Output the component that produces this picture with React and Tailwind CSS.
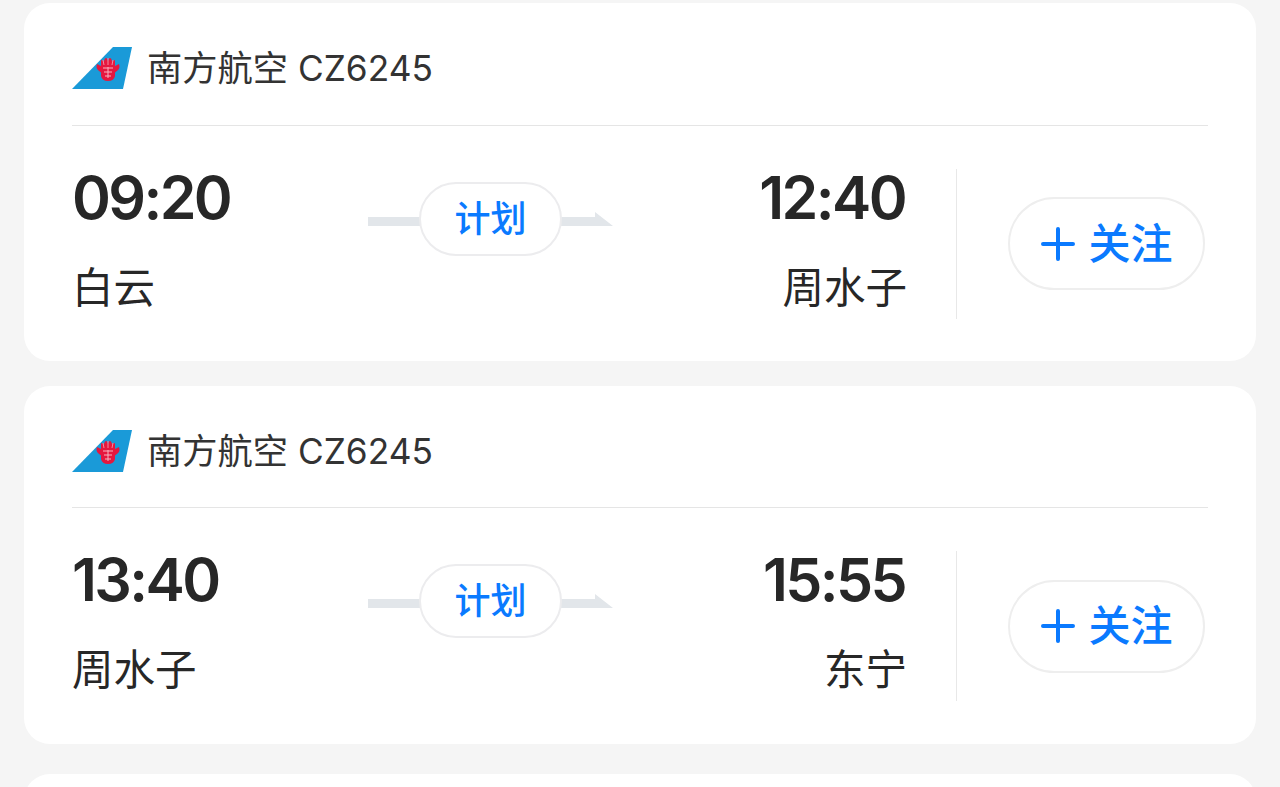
const flights = [
  { from: '09:20', fromName: '白云', to: '12:40', toName: '周水子', headerClass: 'h-[123px]', bodyClass: 'h-[235px]' },
  { from: '13:40', fromName: '周水子', to: '15:55', toName: '东宁', headerClass: 'h-[122px]', bodyClass: 'h-[236px]' },
];

const cjk = "font-['Inter','Noto_Sans_CJK_SC',sans-serif]";

function AirlineLogo() {
  return (
    <svg width="60" height="43" viewBox="0 0 60 43" className="shrink-0 -mt-[3px]">
      <path d="M0 43 L41 1 L60 1 L51 43 Z" fill="#1a9ad8" />
      {/* kapok flower */}
      <path
        d="M29 20 V15 q0-1.500 1.400-1 L31.500 16 L33 12.500 q1-1 2 0 L36 15 L37 12.500 q1-1 2 0 L40.500 16 L41.600 14 q1.400-.5 1.400 1 V20 L47 18 q1.500 4-1.500 6.500 L43 26.500 V30 q-1 5-7 5 q-6 0-7-5 V26.500 L26.500 24.500 q-3-2.500-1.500-6.500 Z"
        fill="#e5173f"
      />
      <path d="M31 14 l1 5 M36 12 v7 M41 14 l-1 5" stroke="#f48ba0" strokeWidth="1" fill="none" />
      <path d="M31 22 h10 M32 26 h8 M33 30 h6 M36 21 v11" stroke="#f7b4c0" strokeWidth="1" fill="none" />
    </svg>
  );
}

function Route() {
  return (
    <div className="relative w-[245px] h-[74px] flex items-center justify-center">
      <svg width="245" height="14" viewBox="0 0 245 14" className="absolute left-0 top-[30px]">
        <path d="M0 5 H227 V0 L245 14 H0 Z" fill="#e2e6ea" />
      </svg>
      <div className="relative w-[143px] h-[74px] rounded-full bg-white border-2 border-[#ececee] flex items-center justify-center text-[#0a7aff] text-[36px] leading-none font-medium">
        计划
      </div>
    </div>
  );
}

function FlightCard({ flight }) {
  return (
    <div className="mx-6 h-[358px] rounded-[26px] bg-white px-12">
      <div className={`${flight.headerClass} border-b border-[#e5e5e5] flex items-center gap-[15px] pt-[10px]`}>
        <AirlineLogo />
        <span className="text-[35.250px] leading-none text-[#333333]">南方航空 CZ6245</span>
      </div>
      <div className={`flex items-center ${flight.bodyClass}`}>
        <div className="w-[835px] h-[150px] flex justify-between">
          <div className="w-[246px] flex flex-col gap-[38px] -mt-[1px]">
            <div className="text-[59px] leading-[60px] font-semibold text-[#272727] tracking-[-2.600px]">{flight.from}</div>
            <div className="text-[41.500px] leading-[44px] text-[#272727]">{flight.fromName}</div>
          </div>
          <div className="pt-[13px]">
            <Route />
          </div>
          <div className="w-[244px] flex flex-col gap-[38px] -mt-[1px] items-end">
            <div className="text-[59px] leading-[60px] font-semibold text-[#272727] tracking-[-2.600px] mr-[2px]">{flight.to}</div>
            <div className="text-[41.500px] leading-[44px] text-[#272727]">{flight.toName}</div>
          </div>
        </div>
        <div className="w-px h-[150px] bg-[#e8e8e8] ml-[49px]"></div>
        <div className="ml-[51px] w-[197px] h-[93px] rounded-full border-2 border-[#eeeeee] flex items-center justify-center gap-[12px] text-[#0a7aff]">
          <svg width="36" height="36" viewBox="0 0 36 36" fill="none" stroke="#0a7aff" strokeWidth="4" strokeLinecap="round">
            <path d="M18 3 V33 M3 18 H33" />
          </svg>
          <span className="text-[42px] leading-none font-medium">关注</span>
        </div>
      </div>
    </div>
  );
}

export default function App() {
  return (
    <div className={`h-[787px] overflow-hidden bg-[#f5f5f5] pt-[3px] ${cjk}`}>
      <div className="flex flex-col gap-[25px]">
        {flights.map((flight, i) => (
          <FlightCard key={i} flight={flight} />
        ))}
      </div>
      <div className="mx-6 mt-[30px] h-[100px] rounded-[26px] bg-white"></div>
    </div>
  );
}
